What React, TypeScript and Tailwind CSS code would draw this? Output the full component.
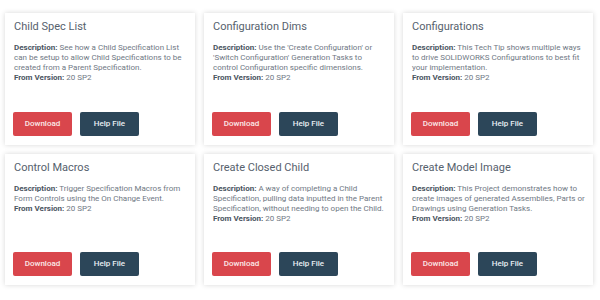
import React from 'react';

type Tip = {
  title: string;
  description: string;
  version: string;
};

const TIPS: Tip[] = [
  {
    title: 'Child Spec List',
    description: 'See how a Child Specification List can be setup to allow Child Specifications to be created from a Parent Specification.',
    version: '20 SP2',
  },
  {
    title: 'Configuration Dims',
    description: "Use the 'Create Configuration' or 'Switch Configuration' Generation Tasks to control Configuration specific dimensions.",
    version: '20 SP2',
  },
  {
    title: 'Configurations',
    description: 'This Tech Tip shows multiple ways to drive SOLIDWORKS Configurations to best fit your implementation.',
    version: '20 SP2',
  },
  {
    title: 'Control Macros',
    description: 'Trigger Specification Macros from Form Controls using the On Change Event.',
    version: '20 SP2',
  },
  {
    title: 'Create Closed Child',
    description: 'A way of completing a Child Specification, pulling data inputted in the Parent Specification, without needing to open the Child.',
    version: '20 SP2',
  },
  {
    title: 'Create Model Image',
    description: 'This Project demonstrates how to create images of generated Assemblies, Parts or Drawings using Generation Tasks.',
    version: '20 SP2',
  },
];

const TipCard: React.FC<{ tip: Tip; tall: boolean }> = ({ tip, tall }) => {
  return (
    <div
      className={`flex flex-col bg-white px-[8px] pt-[7px] pb-[9px] shadow-[0_0_5px_rgba(0,0,0,0.16)] ${
        tall ? 'h-[132px]' : 'h-[131px]'
      }`}
    >
      <h3 className="text-[11px] leading-[13px] text-[#56616d] mb-[10px] pl-[1px]">{tip.title}</h3>
      <div className="text-[8px] leading-[10px] text-[#6f7884] pl-[1px]">
        <p>
          <span className="font-bold text-[#4a5561]">Description:</span> {tip.description}
        </p>
        <p>
          <span className="font-bold text-[#4a5561]">From Version:</span> {tip.version}
        </p>
      </div>
      <div className="mt-auto flex gap-[8px]">
        <button className="w-[59px] h-[24px] rounded-[2px] bg-[#d9464c] text-[8px] font-medium text-[#fbe9e9]">
          Download
        </button>
        <button className="w-[59px] h-[24px] rounded-[2px] bg-[#2c4659] text-[8px] font-medium text-[#e8eef3]">
          Help File
        </button>
      </div>
    </div>
  );
};

export default function App() {
  return (
    <div className="w-[600px] h-[300px] bg-white pl-[5px] pr-[7px] pt-[13px] font-['Roboto',sans-serif]">
      <div className="grid grid-cols-3 gap-[9px]">
        {TIPS.map((tip, i) => (
          <TipCard key={tip.title} tip={tip} tall={i < 3} />
        ))}
      </div>
    </div>
  );
}
